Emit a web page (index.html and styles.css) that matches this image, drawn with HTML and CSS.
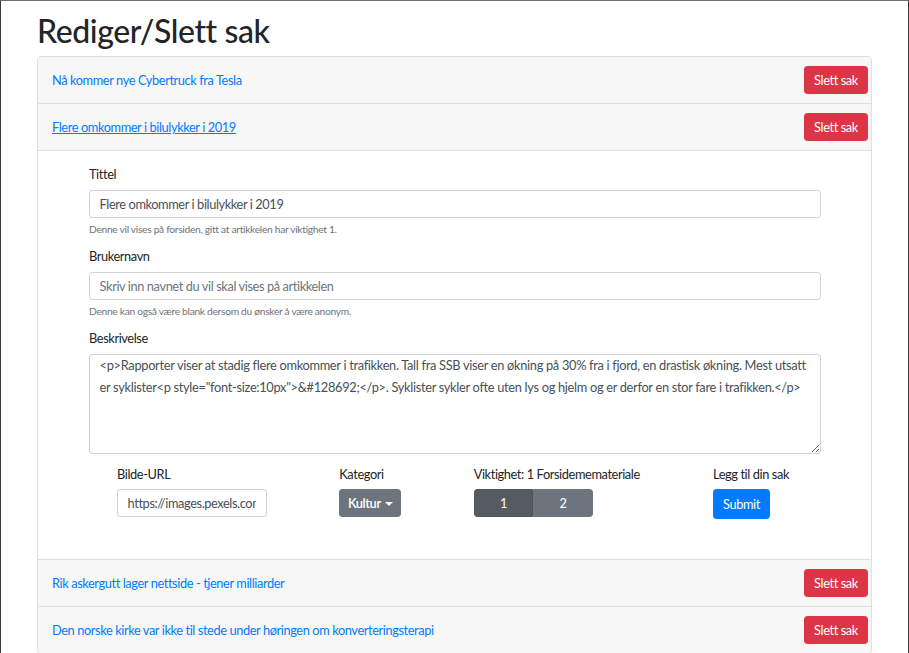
FILE: index.html
```html
<!DOCTYPE html>
<html lang="no">
<head>
<meta charset="utf-8">
<title>Rediger/Slett sak</title>
<link rel="stylesheet" href="styles.css">
</head>
<body>
<div class="frame">
  <main class="page">
    <h1 class="title">Rediger/Slett sak</h1>
    <div class="accordion">
      <div class="item">
        <div class="item-header">
          <a class="item-link" href="#">Nå kommer nye Cybertruck fra Tesla</a>
          <button class="btn btn-danger" type="button">Slett sak</button>
        </div>
      </div>
      <div class="item">
        <div class="item-header">
          <a class="item-link is-focused" href="#">Flere omkommer i bilulykker i 2019</a>
          <button class="btn btn-danger" type="button">Slett sak</button>
        </div>
        <div class="item-body">
          <form class="form">
            <div class="form-group">
              <label class="label">Tittel</label>
              <input class="input" type="text" value="Flere omkommer i bilulykker i 2019">
              <small class="help">Denne vil vises på forsiden, gitt at artikkelen har viktighet 1.</small>
            </div>
            <div class="form-group">
              <label class="label">Brukernavn</label>
              <input class="input" type="text" placeholder="Skriv inn navnet du vil skal vises på artikkelen">
              <small class="help">Denne kan også være blank dersom du ønsker å være anonym.</small>
            </div>
            <div class="form-group">
              <label class="label">Beskrivelse</label>
              <textarea class="textarea">&lt;p&gt;Rapporter viser at stadig flere omkommer i trafikken. Tall fra SSB viser en økning på 30% fra i fjord, en drastisk økning. Mest utsatt er syklister&lt;p style="font-size:10px"&gt;&amp;#128692;&lt;/p&gt;. Syklister sykler ofte uten lys og hjelm og er derfor en stor fare i trafikken.&lt;/p&gt;</textarea>
            </div>
            <div class="form-row">
              <div class="field field-url">
                <label class="label label-row">Bilde-URL</label>
                <input class="input input-url" type="text" value="https://images.pexels.com/photos/163016/crash-test-collision-60-km-h-distraction-163016.jpeg">
              </div>
              <div class="field field-cat">
                <label class="label label-row">Kategori</label>
                <button class="btn btn-secondary btn-dropdown" type="button">Kultur<span class="caret"></span></button>
              </div>
              <div class="field field-imp">
                <label class="label label-row">Viktighet: 1 Forsidememateriale</label>
                <div class="btn-group">
                  <button class="btn btn-secondary btn-seg is-active" type="button">1</button>
                  <button class="btn btn-secondary btn-seg" type="button">2</button>
                </div>
              </div>
              <div class="field field-submit">
                <label class="label label-row">Legg til din sak</label>
                <button class="btn btn-primary btn-submit" type="submit">Submit</button>
              </div>
            </div>
          </form>
        </div>
      </div>
      <div class="item">
        <div class="item-header">
          <a class="item-link" href="#">Rik askergutt lager nettside - tjener milliarder</a>
          <button class="btn btn-danger" type="button">Slett sak</button>
        </div>
      </div>
      <div class="item">
        <div class="item-header">
          <a class="item-link" href="#">Den norske kirke var ikke til stede under høringen om konverteringsterapi</a>
          <button class="btn btn-danger" type="button">Slett sak</button>
        </div>
      </div>
    </div>
  </main>
</div>
</body>
</html>
```

FILE: styles.css
```css
html {
  overflow: hidden;
}

html, body {
  margin: 0;
  padding: 0;
}

body {
  font-family: "Segoe UI", Lato, "Noto Sans", sans-serif;
  color: #212529;
  background: #ffffff;
  font-size: 12.8px;
  letter-spacing: -0.4px;
}

.frame {
  box-sizing: border-box;
  min-height: 100vh;
  border-top: 1px solid #6e6e6e;
  border-left: 1px solid #3a3a3a;
  border-right: 1px solid #3a3a3a;
}

.page {
  padding: 0 36px 0 36px;
}

.title {
  margin: 0 0 6px 0;
  padding-top: 11px;
  font-size: 32px;
  font-weight: 500;
  line-height: 38px;
  color: #212529;
}

.accordion {
  border: 1px solid #dfdfdf;
  border-radius: 4px;
  overflow: hidden;
}

.item + .item {
  border-top: 1px solid #dfdfdf;
}

.item-header {
  display: flex;
  align-items: center;
  justify-content: space-between;
  height: 46px;
  padding: 0 3px 0 14px;
  background: #f7f7f7;
}

.item-link {
  color: #007bff;
  text-decoration: none;
  font-size: 12.8px;
}

.item-link.is-focused {
  text-decoration: underline;
}

.btn {
  font-family: inherit;
  font-size: 12.8px;
  letter-spacing: -0.4px;
  border: 1px solid transparent;
  border-radius: 3.2px;
  color: #ffffff;
  cursor: pointer;
  padding: 0;
  box-sizing: border-box;
}

.btn-danger {
  background: #dc3545;
  border-color: #dc3545;
  width: 64px;
  height: 28px;
}

.btn-secondary {
  background: #6c757d;
  border-color: #6c757d;
}

.btn-primary {
  background: #007bff;
  border-color: #007bff;
}

.item-body {
  border-top: 1px solid #dfdfdf;
  padding: 14px 50px 40px 51px;
  background: #ffffff;
}

.form-group {
  margin-bottom: 11px;
}

.label {
  display: block;
  line-height: 19px;
  margin-bottom: 6px;
  color: #212529;
}

.label-row {
  margin-bottom: 5px;
  white-space: nowrap;
}

.input,
.textarea {
  display: block;
  box-sizing: border-box;
  width: 100%;
  font-family: inherit;
  font-size: 12.8px;
  letter-spacing: -0.4px;
  color: #495057;
  background: #ffffff;
  border: 1px solid #ced4da;
  border-radius: 3.2px;
  padding: 0 9.6px;
  margin: 0;
}

.input {
  height: 28px;
}

.input::placeholder {
  color: #6c757d;
}

.help {
  display: block;
  margin-top: 4px;
  font-size: 10.24px;
  line-height: 14px;
  letter-spacing: -0.3px;
  color: #6c757d;
}

.textarea {
  height: 100px;
  padding-top: 0;
  line-height: 21.6px;
  letter-spacing: -0.3px;
  resize: vertical;
}

.form-row {
  display: flex;
  justify-content: space-between;
  padding: 0 28px;
}

.field-url { width: 150px; }
.field-cat { width: 62px; }
.field-imp { width: 167px; }
.field-submit { width: 80px; }

.btn-dropdown {
  width: 62px;
  height: 28px;
  font-weight: 600;
}

.caret {
  display: inline-block;
  margin-left: 4px;
  vertical-align: 2px;
  border-top: 4px solid #ffffff;
  border-left: 4px solid transparent;
  border-right: 4px solid transparent;
}

.btn-group {
  display: flex;
  width: 119px;
}

.btn-seg {
  flex: 1;
  height: 28px;
  border-radius: 0;
}

.btn-seg:first-child {
  border-radius: 3.2px 0 0 3.2px;
}

.btn-seg:last-child {
  border-radius: 0 3.2px 3.2px 0;
}

.btn-seg.is-active {
  background: #545b62;
  border-color: #4e555b;
}

.btn-submit {
  width: 57px;
  height: 30px;
}
```
